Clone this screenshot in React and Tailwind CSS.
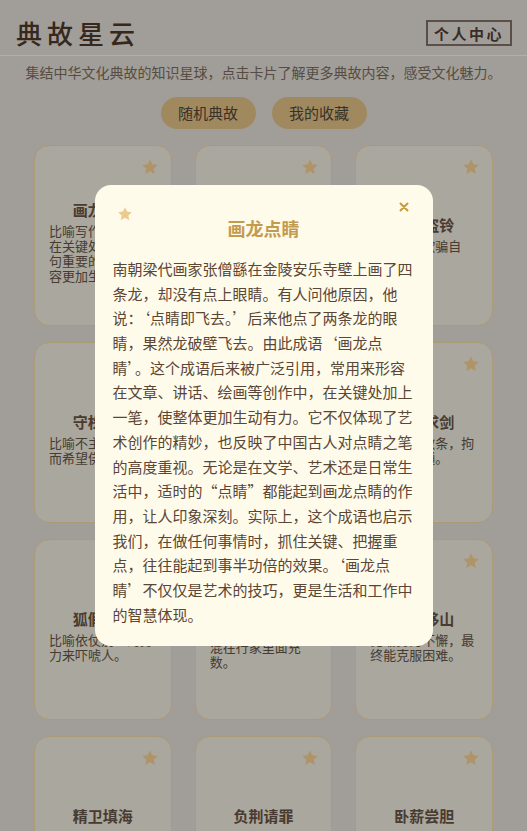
import { useState } from 'react';

const stories = [
  { id: 1, title: '画龙点睛', desc: '比喻写作或讲话时在关键处点明一两句重要的话，使内容更加生动有力。' },
  { id: 2, title: '叶公好龙', desc: '比喻口头上说爱好某事物，实际上并不真爱好。' },
  { id: 3, title: '掩耳盗铃', desc: '比喻自己欺骗自己。' },
  { id: 4, title: '守株待兔', desc: '比喻不主动努力，而希望侥幸得益。' },
  { id: 5, title: '亡羊补牢', desc: '比喻出了问题以后想办法补救。' },
  { id: 6, title: '刻舟求剑', desc: '比喻死守教条，拘泥不知变通。' },
  { id: 7, title: '狐假虎威', desc: '比喻依仗别人的势力来吓唬人。' },
  { id: 8, title: '滥竽充数', desc: '比喻没有本领的人混在行家里面充数。' },
  { id: 9, title: '愚公移山', desc: '比喻努力不懈，最终能克服困难。' },
  { id: 10, title: '精卫填海', desc: '比喻意志坚决，不畏艰难。' },
  { id: 11, title: '负荆请罪', desc: '表示主动向人认错赔罪。' },
  { id: 12, title: '卧薪尝胆', desc: '形容人刻苦自励，发奋图强。' },
];

const detail = {
  title: '画龙点睛',
  text: '南朝梁代画家张僧繇在金陵安乐寺壁上画了四条龙，却没有点上眼睛。有人问他原因，他说：‘点睛即飞去。’后来他点了两条龙的眼睛，果然龙破壁飞去。由此成语‘画龙点睛’。这个成语后来被广泛引用，常用来形容在文章、讲话、绘画等创作中，在关键处加上一笔，使整体更加生动有力。它不仅体现了艺术创作的精妙，也反映了中国古人对点睛之笔的高度重视。无论是在文学、艺术还是日常生活中，适时的“点睛”都能起到画龙点睛的作用，让人印象深刻。实际上，这个成语也启示我们，在做任何事情时，抓住关键、把握重点，往往能起到事半功倍的效果。‘画龙点睛’不仅仅是艺术的技巧，更是生活和工作中的智慧体现。',
};

function Star({ className }) {
  return (
    <svg viewBox="0 0 24 24" fill="currentColor" className={className}>
      <path d="M12 1.8l3.1 6.6 7.1.9-5.2 4.9 1.3 7.1L12 17.8l-6.3 3.5 1.3-7.1L1.8 9.3l7.1-.9z" />
    </svg>
  );
}

export default function App() {
  const [open, setOpen] = useState(true);

  return (
    <div className="min-h-screen bg-[#e7e3db] font-['Noto_Sans_CJK_SC','Noto_Sans',sans-serif]">
      <header className="h-[56px] pt-[11px] pl-4 pr-[15px] flex items-center justify-between border-b border-[#fffce6]">
        <h1 className="text-[26px] tracking-[5px] text-[#503a2b] font-medium leading-none">典故星云</h1>
        <button className="h-[26px] px-[6px] border-2 border-[#827268] text-[15px] font-bold tracking-[2.5px] text-[#533f38] leading-none">
          个人中心
        </button>
      </header>

      <p className="mt-[6px] text-center text-[14px] leading-[20px] text-[#7d6e5f]">
        集结中华文化典故的知识星球，点击卡片了解更多典故内容，感受文化魅力。
      </p>

      <div className="mt-[15px] flex justify-center gap-4">
        <button className="h-[32px] w-[95px] rounded-full bg-[#e5c589] text-[15px] text-[#544639]">随机典故</button>
        <button className="h-[32px] w-[95px] rounded-full bg-[#e5c589] text-[15px] text-[#544639]">我的收藏</button>
      </div>

      <div className="mt-4 px-[34px] grid grid-cols-3 gap-x-[23px] gap-y-4 pb-8">
        {stories.map((s) => (
          <div
            key={s.id}
            onClick={() => setOpen(true)}
            className="relative h-[181px] rounded-[15px] border border-[#f6dbaa] bg-[#f3efe2] pt-[25px] pb-[14px] px-[14px] flex flex-col justify-center"
          >
            <Star className="absolute top-[12px] right-[12px] w-[18px] h-[18px] text-[#fad596]" />
            <h3 className="text-center text-[15px] leading-[20px] font-bold text-[#6a5545] mb-[3px]">{s.title}</h3>
            <p className="text-[13px] leading-[15px] text-[#665646]">{s.desc}</p>
          </div>
        ))}
      </div>

      {open && (
        <div className="fixed inset-0 bg-black/30 flex items-center justify-center">
          <div className="relative w-[338px] rounded-[16px] bg-[#fefbea] pt-[31px] pb-[18px] px-[18px]">
            <Star className="absolute top-[21px] left-[22px] w-[16px] h-[16px] text-[#ebcb8e]" />
            <button onClick={() => setOpen(false)} className="absolute top-[17px] right-[24px] w-[10px] h-[10px] text-[#c99b3c]">
              <svg viewBox="0 0 10 10" className="w-[10px] h-[10px]" stroke="currentColor" strokeWidth="2" strokeLinecap="round">
                <path d="M1.5 1.5l7 7M8.5 1.5l-7 7" />
              </svg>
            </button>
            <h2 className="text-center text-[18px] leading-[24px] font-bold text-[#c49a4f] mb-[16.5px]">{detail.title}</h2>
            <p className="text-[15px] leading-[24.7px] text-[#5b4636]">{detail.text}</p>
          </div>
        </div>
      )}
    </div>
  );
}
